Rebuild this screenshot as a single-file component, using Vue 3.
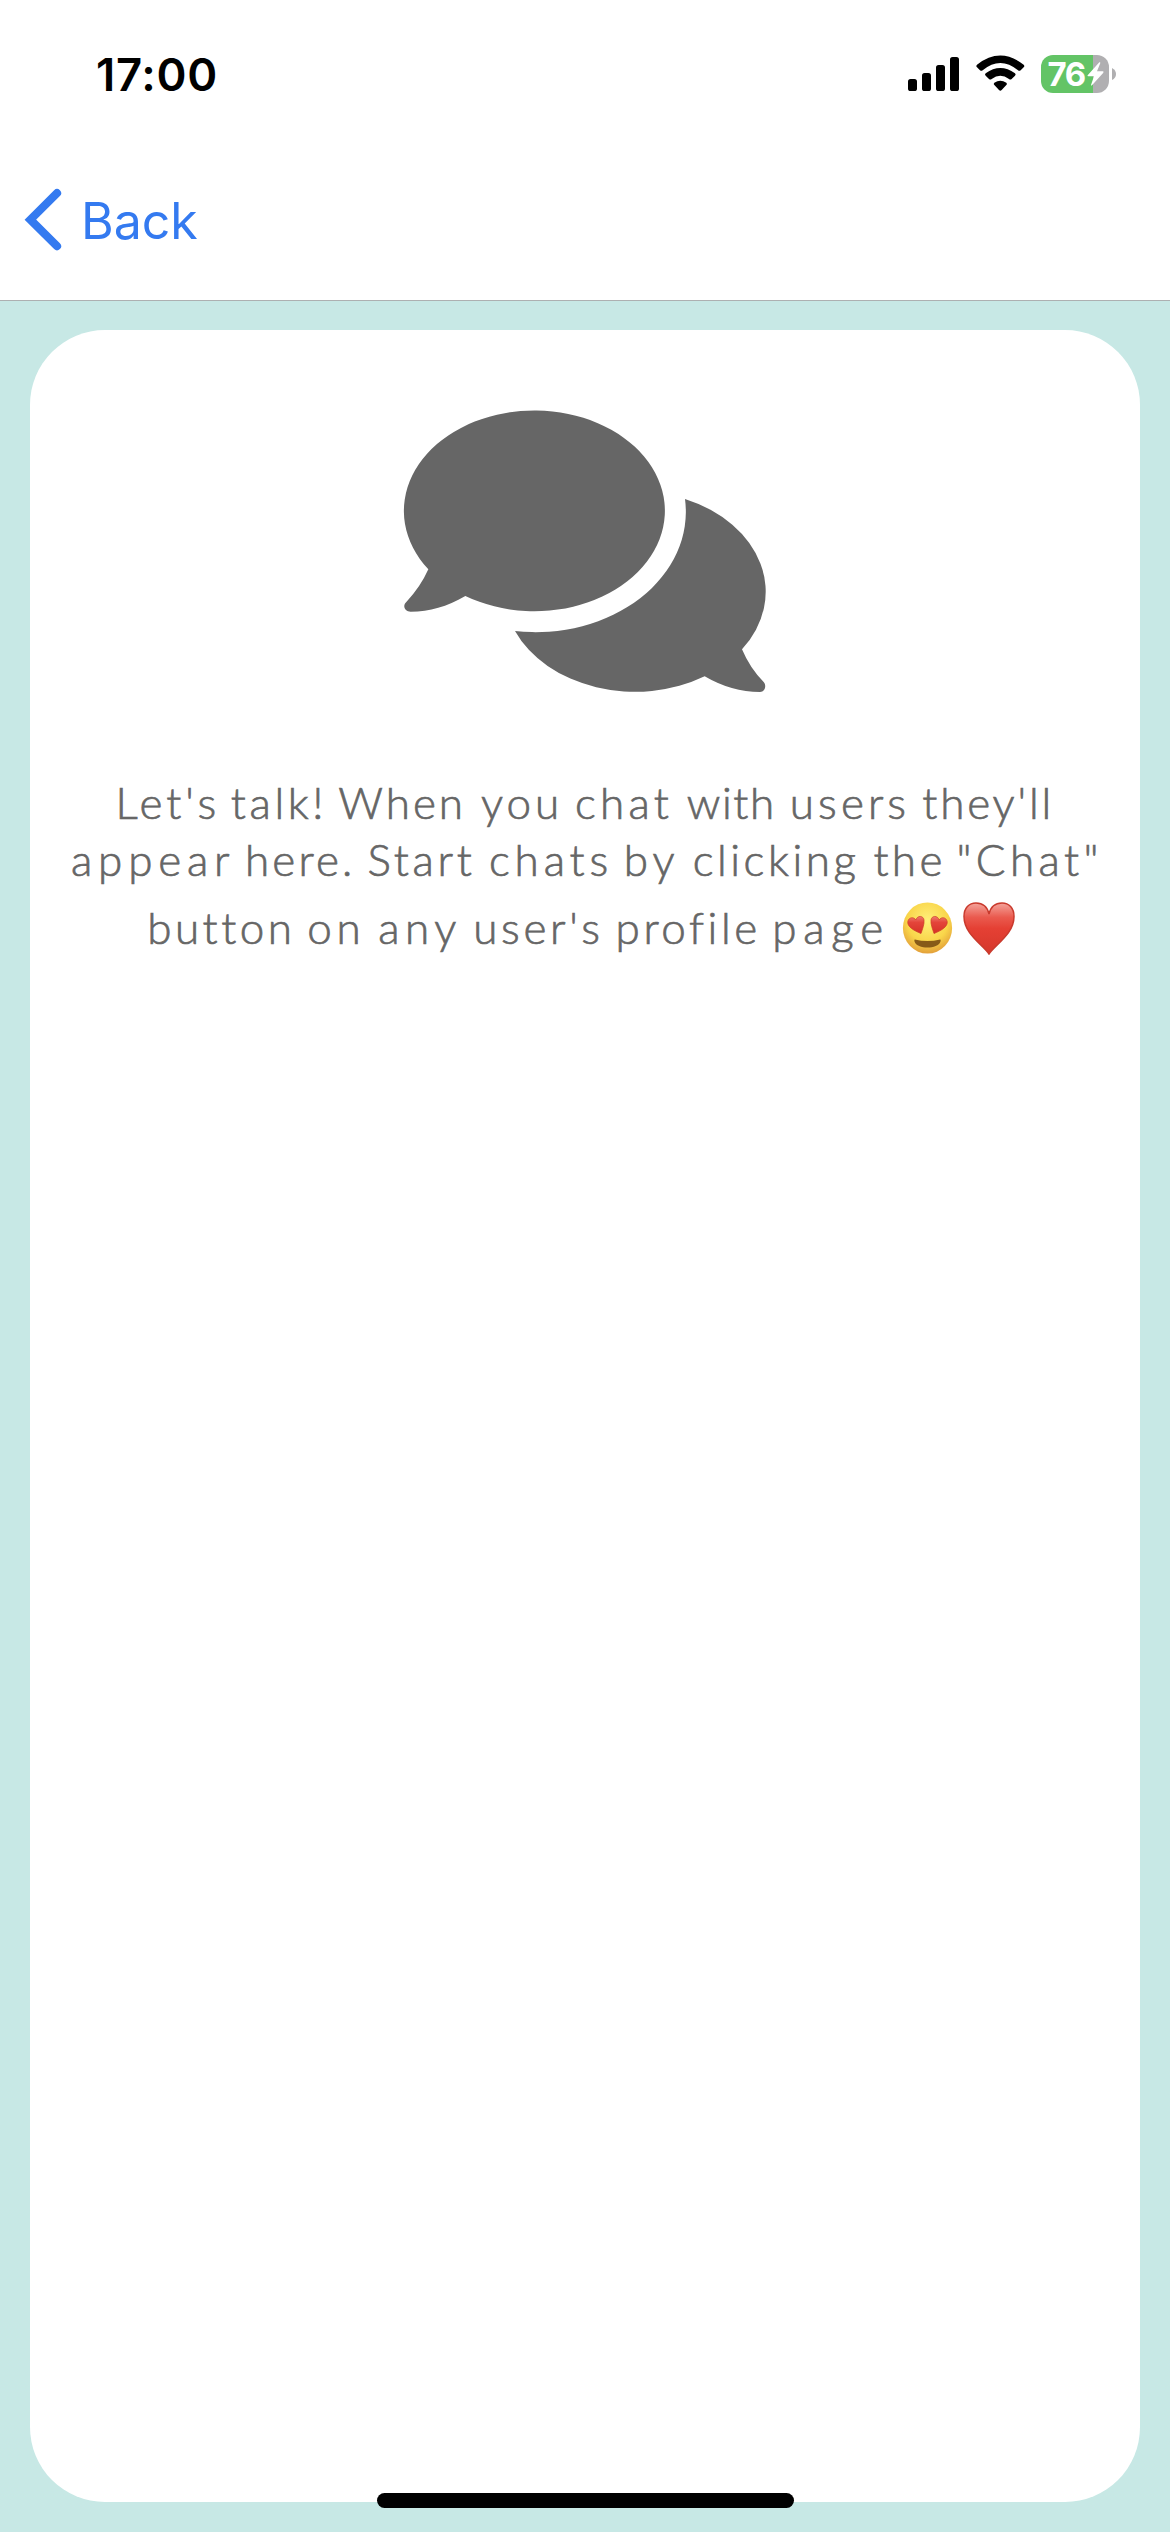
<script setup>
const bars = [
  { x: 0, h: 12 },
  { x: 14, h: 18 },
  { x: 28, h: 26 },
  { x: 42, h: 34 },
]

// Each word: text, left edge and right edge of its ink within the screen width.
const copy = [
  {
    name: 'first',
    end: 1060,
    words: [
      ["Let's", 119.6, 214.6], ['talk!', 231.8, 320.3], ['When', 339.3, 459.8], ['you', 481, 556],
      ['chat', 577, 668.8], ['with', 687.8, 771], ['users', 792.8, 904.4], ["they'll", 923.3, 1047.6],
    ],
  },
  {
    name: 'second',
    end: 1110,
    words: [
      ['appear', 72, 229], ['here.', 248, 350], ['Start', 368.5, 471.8], ['chats', 491, 606.5],
      ['by', 626.8, 674.4], ['clicking', 694.7, 855.5], ['the', 874.4, 940.5], ['"Chat"', 959.5, 1095.5],
    ],
  },
  {
    name: 'third',
    end: 902.5,
    words: [
      ['button', 150.2, 287.6], ['on', 309.3, 357.5], ['any', 379.2, 456.3], ["user's", 476.3, 598.3],
      ['profile', 618.6, 754.2], ['page', 775.3, 881.3],
    ],
  },
]

const ctx = document.createElement('canvas').getContext('2d')
ctx.font = '300 44px Lato'

const lines = copy.map(({ name, end, words }) => ({
  name,
  words: words.map(([text, x0, x1], i) => {
    const m = ctx.measureText(text)
    const ink = m.actualBoundingBoxLeft + m.actualBoundingBoxRight
    const next = i + 1 < words.length ? words[i + 1][1] : end
    return {
      text,
      style: {
        width: `${next - x0}px`,
        textIndent: `${m.actualBoundingBoxLeft}px`,
        letterSpacing: `${(x1 - x0 - ink) / (text.length - 1)}px`,
      },
    }
  }),
}))
</script>

<template>
  <div class="screen">
    <header class="header">
      <div class="status">
        <span class="time">17:00</span>
        <div class="indicators">
          <svg class="signal" width="51" height="34" viewBox="0 0 51 34">
            <rect v-for="b in bars" :key="b.x" :x="b.x" :y="34 - b.h" width="9" :height="b.h" rx="2.6" />
          </svg>
          <svg class="wifi" width="49" height="37" viewBox="0 0 147 111">
            <path d="M3 29Q73 -26 143 29Q147 33 143 37L134 46Q130 49 126 46Q73 2 20 46Q16 49 12 46L3 37Q-1 33 3 29Z" />
            <path d="M29 55Q73 23 117 55Q121 59 117 62L107 72Q103 75 99 72Q73 53 47 72Q43 75 39 72L29 62Q25 59 29 55Z" />
            <path d="M55 83Q73 71 91 83Q95 87 91 90L77 105Q73 110 69 105L55 90Q51 87 55 83Z" />
          </svg>
          <div class="battery">
            <div class="cell">
              <span class="percent">76</span>
              <svg class="bolt" width="17" height="24" viewBox="0 0 51 72">
                <path d="M37 1L2 40Q0 43 4 43H21L12 69Q12 72 15 70L49 32Q51 28 47 28H30L40 3Q40 0 37 1Z" />
              </svg>
            </div>
            <svg width="4" height="12" viewBox="0 0 4 12"><path d="M0 0Q4 2 4 6T0 12Z" fill="#b0afb1" /></svg>
          </div>
        </div>
      </div>
      <nav class="nav">
        <svg class="chevron" width="40" height="64" viewBox="0 0 40 64">
          <path d="M34 5.2L7.4 31.7L34 58.2" fill="none" stroke="#347af0" stroke-width="8.2" stroke-linecap="round" />
        </svg>
        <span class="back">Back</span>
      </nav>
    </header>

    <main class="body">
      <section class="card">
        <svg class="chats" width="410" height="320" viewBox="0 0 1230 960" fill="#666">
          <path d="M256 618A391.5 301 0 1 0 145 538Q122 590 79 636C66 648 75 665 92 665C150 665 200 650 256 618Z" />
          <path d="M915 327A392 301 0 0 1 1086 778Q1110 835 1151 876C1161 888 1154 906 1140 906Q1054 906 974 859A392 301 0 0 1 405 723A451 361 0 0 0 915 327Z" />
        </svg>
        <p class="message">
          <span v-for="line in lines" :key="line.name" class="line" :class="line.name">
            <span v-for="w in line.words" :key="w.text" class="word" :style="w.style">{{ w.text }}</span>
            <template v-if="line.name === 'third'">
              <svg class="face" width="51" height="52" viewBox="0 0 50 52" role="img" aria-label="😍">
                <defs>
                  <radialGradient id="skin" cx=".5" cy=".35" r=".65">
                    <stop offset="0" stop-color="#fff07a" />
                    <stop offset=".65" stop-color="#f9d54a" />
                    <stop offset="1" stop-color="#e3a03a" />
                  </radialGradient>
                  <linearGradient id="red" x1="0" y1="0" x2="0" y2="1">
                    <stop offset="0" stop-color="#ee7b6e" />
                    <stop offset=".35" stop-color="#e4453a" />
                    <stop offset="1" stop-color="#d63127" />
                  </linearGradient>
                </defs>
                <ellipse cx="25" cy="26" rx="24.6" ry="25.6" fill="url(#skin)" />
                <path d="M18.5 31.5C11 28.5 4.500 24.500 5.300 19.500C6.300 15 11.500 14.500 13.200 18C15 13 21 13.500 21.500 18C22 22 20 27 18.500 31.500Z" fill="url(#red)" stroke="#cd3b25" stroke-width=".7" />
                <path d="M31.5 31.5C39 28.500 45.500 24.500 44.700 19.500C43.700 15 38.500 14.500 36.800 18C35 13 29 13.500 28.500 18C28 22 30 27 31.500 31.500Z" fill="url(#red)" stroke="#cd3b25" stroke-width=".7" />
                <path d="M12.3 37.5Q25 40.500 37.700 37.500Q38.500 37.500 38 39.500C35.500 47.500 14.500 47.500 12 39.500Q11.500 37.500 12.300 37.500Z" fill="#875a18" />
              </svg>
              <svg class="heart" width="52" height="53" viewBox="0 0 52 53" role="img" aria-label="❤️">
                <defs>
                  <linearGradient id="shine" x1="0" y1="0" x2="0" y2="1">
                    <stop offset="0" stop-color="#f4a49b" />
                    <stop offset=".28" stop-color="#ea5a4e" />
                    <stop offset=".5" stop-color="#e54034" />
                    <stop offset="1" stop-color="#d5372b" />
                  </linearGradient>
                </defs>
                <path d="M26 52C19 42 1 32 1 14.500C1 6 6 1 13 1C20 1 24.500 5.500 26 12C27.500 5.500 32 1 39 1C46 1 51 6 51 14.500C51 32 33 42 26 52Z" fill="url(#shine)" stroke="#c93a2d" stroke-width="1.5" />
              </svg>
            </template>
          </span>
        </p>
      </section>
      <div class="home"></div>
    </main>
  </div>
</template>

<style>
body {
  margin: 0;
}
</style>

<style scoped>
.screen {
  width: 1170px;
  height: 2532px;
  display: flex;
  flex-direction: column;
  background: #c7e8e5;
  overflow: hidden;
}
.header {
  box-sizing: border-box;
  height: 301px;
  background: #fff;
  border-bottom: 1px solid #adb0b1;
  font-family: Inter, "Liberation Sans", sans-serif;
}
.status {
  height: 148px;
  display: flex;
  justify-content: space-between;
  padding: 0 54px 0 96px;
}
.time {
  margin-top: 47px;
  height: 55px;
  line-height: 55px;
  font-size: 45.5px;
  font-weight: 600;
  letter-spacing: 0.7px;
}
.indicators {
  display: flex;
  align-items: flex-start;
}
.signal {
  margin-top: 57px;
}
.wifi {
  margin: 55px 16px 0 17px;
}
.battery {
  margin-top: 55px;
  display: flex;
  align-items: center;
  gap: 3px;
}
.cell {
  box-sizing: border-box;
  width: 68.5px;
  height: 38px;
  border-radius: 12px;
  padding-left: 7px;
  display: flex;
  align-items: center;
  background: linear-gradient(90deg, #63c466 52px, #b0afb1 52px);
}
.percent {
  width: 39px;
  font-size: 33px;
  line-height: 38px;
  font-weight: 700;
  letter-spacing: -1.5px;
  color: #fff;
}
.bolt {
  fill: #fff;
}
.nav {
  height: 144px;
  display: flex;
  align-items: center;
  padding-left: 23px;
}
.chevron {
  margin-right: 18px;
}
.back {
  padding-top: 2px;
  color: #347af0;
  font-size: 50px;
  line-height: 60px;
}
.body {
  position: relative;
  flex: 1;
  padding: 29px 30px 30px;
  display: flex;
}
.card {
  flex: 1;
  background: #fff;
  border-radius: 75px;
  display: flex;
  flex-direction: column;
  align-items: center;
}
.chats {
  margin-top: 60px;
}
.message {
  align-self: stretch;
  margin: 64px 0 0;
  font-family: Lato, "Open Sans", sans-serif;
  font-weight: 300;
  font-size: 44px;
  color: #666;
  -webkit-text-stroke: 0.7px #666;
  white-space: nowrap;
}
.line {
  display: flex;
  height: 56.500px;
  line-height: 56.500px;
}
.word {
  flex: none;
}
.first {
  padding-left: 89.6px;
}
.second {
  padding-left: 42px;
}
.third {
  height: 80px;
  line-height: 79px;
  padding-left: 120.2px;
  align-items: center;
}
.face,
.heart {
  margin-top: 2px;
}
.heart {
  margin-left: 10px;
}
.home {
  position: absolute;
  left: 377px;
  bottom: 24px;
  width: 417px;
  height: 15px;
  border-radius: 8px;
  background: #000;
}
</style>
